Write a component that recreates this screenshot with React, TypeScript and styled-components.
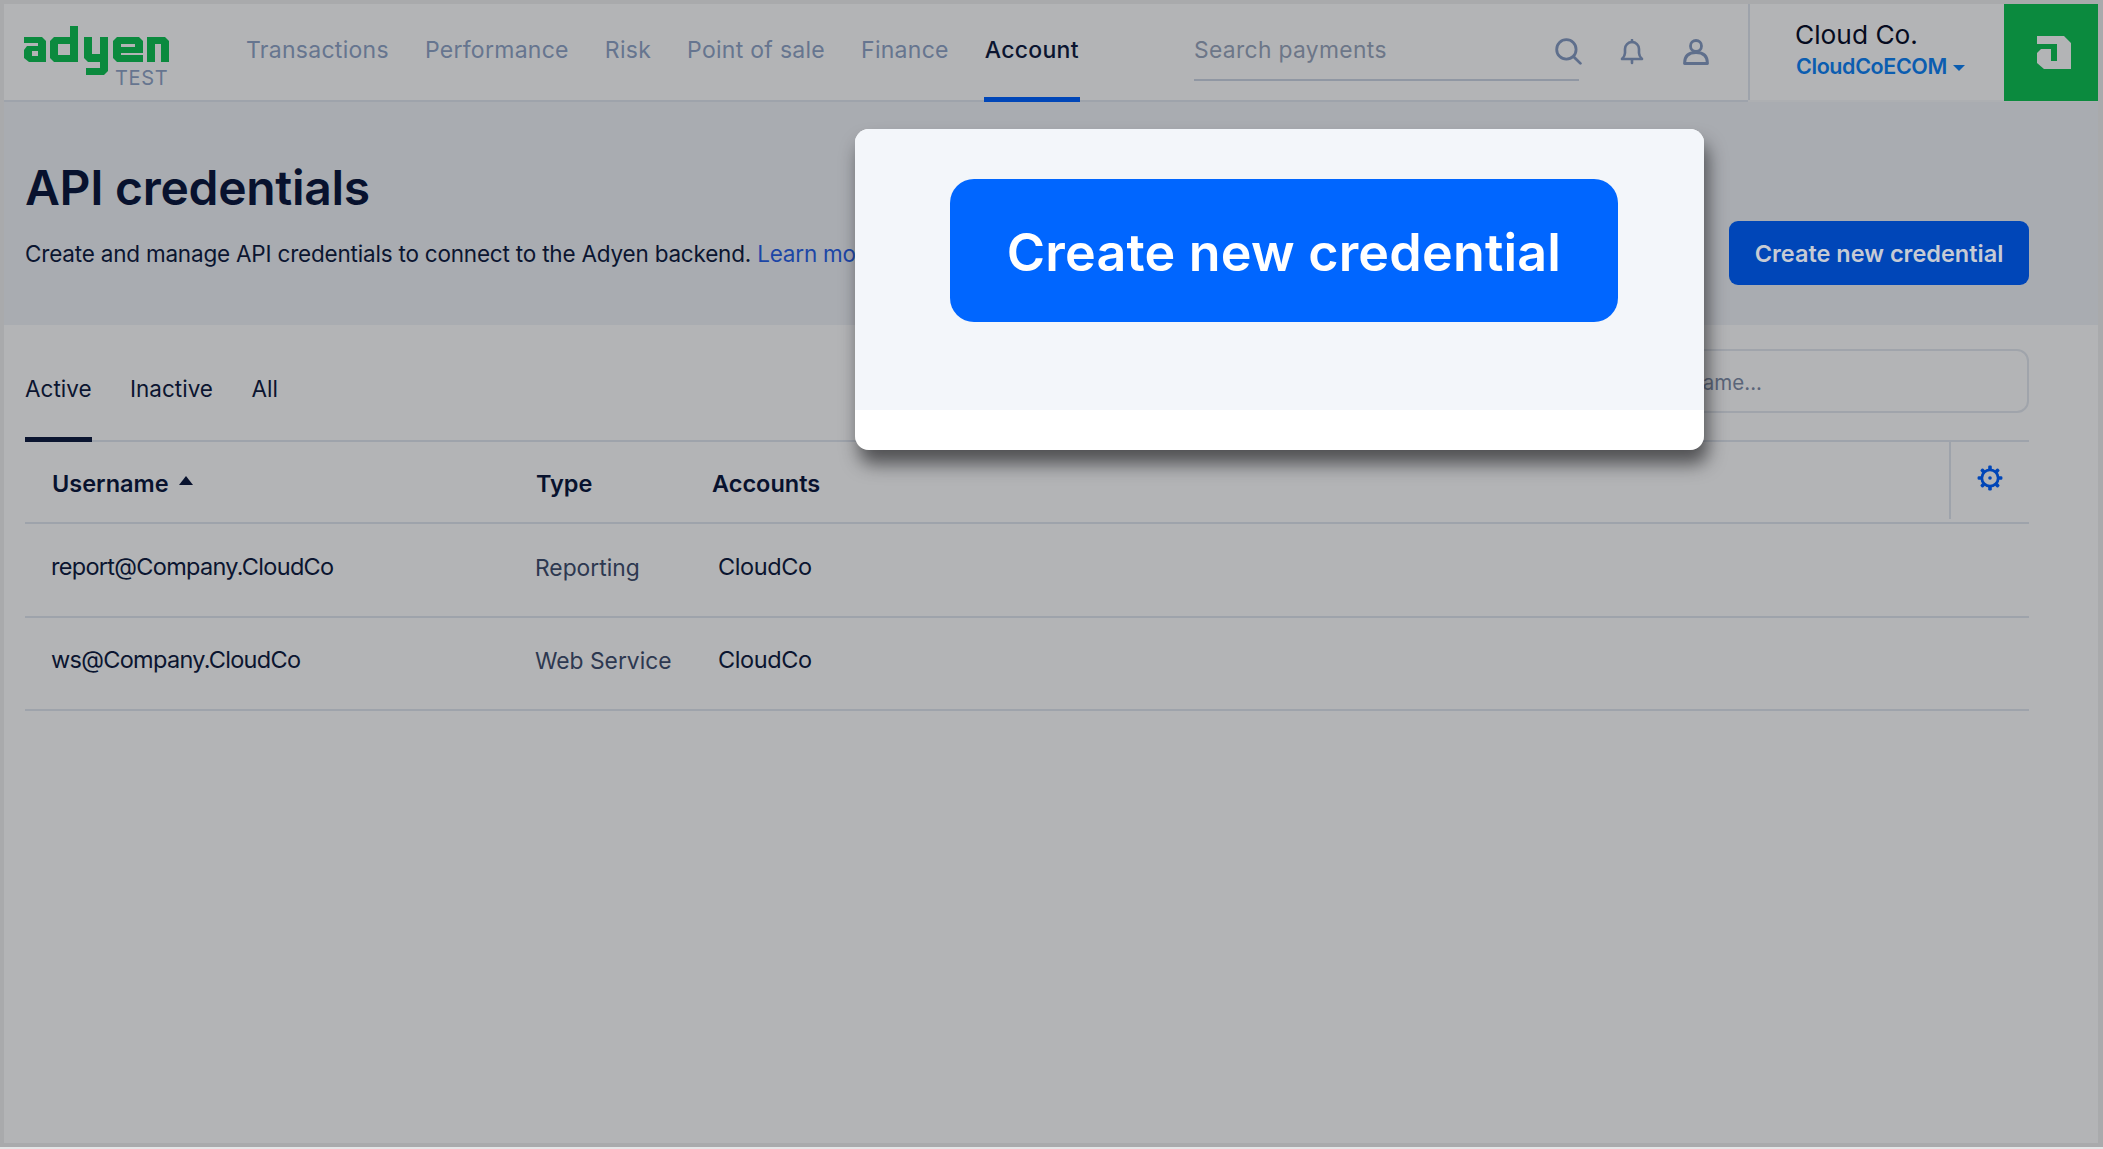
import React from "react";
import styled, { createGlobalStyle } from "styled-components";

const Global = createGlobalStyle`
  html, body { margin: 0; padding: 0; background: #e4e5e6; }
  * { box-sizing: border-box; }
  body { font-family: Inter, "Liberation Sans", sans-serif; color: #0b1530; overflow: hidden; }
`;

const Frame = styled.div`
  position: relative;
  width: 2103px;
  height: 1147px;
  background: #a9aaac;
  padding: 4px 5px 4px 4px;
`;
const Page = styled.div`
  height: 100%;
  background: #b3b4b6;
  display: flex;
  flex-direction: column;
`;
const Header = styled.header`
  height: 98px;
  flex: none;
  display: flex;
  align-items: stretch;
  border-bottom: 2px solid #9ea3ab;
`;
const LogoBox = styled.div`
  width: 206px;
  flex: none;
  padding: 22px 0 0 19px;
  display: flex;
  flex-direction: column;
  position: relative;
`;
const TestLabel = styled.span`
  position: absolute;
  left: 111px;
  top: 62px;
  font-size: 20px;
  line-height: 24px;
  letter-spacing: 0.7px;
  color: #66758f;
`;
const Nav = styled.nav`
  display: flex;
  gap: 34px;
  margin-left: 35px;
`;
const NavItem = styled.a<{ $active?: boolean }>`
  display: flex;
  align-items: center;
  height: 98px;
  padding: 0 1px 2px;
  font-size: 23px;
  letter-spacing: 0.28px;
  font-weight: ${(p) => (p.$active ? 500 : 400)};
  color: ${(p) => (p.$active ? "#0b1530" : "#66758f")};
  border-bottom: 5px solid ${(p) => (p.$active ? "#0046b8" : "transparent")};
`;
const HeaderSearch = styled.div`
  width: 385px;
  margin: 24px 0 0 auto;
  height: 53px;
  border-bottom: 2px solid #9097a3;
  font-size: 22.8px;
  letter-spacing: 0.35px;
  line-height: 44px;
  color: #6c7688;
  flex: none;
  display: flex;
  justify-content: space-between;
`;
const SearchGlyph = styled.span`
  color: #5f6f8c;
  margin: 9px -3px 0 0;
  line-height: 0;
`;
const IconRow = styled.div`
  display: flex;
  align-items: center;
  width: 169px;
  padding-left: 21px;
  color: #5f6f8c;
  flex: none;
`;
const IconSlot = styled.span`
  width: 64px;
  flex: none;
  display: flex;
  justify-content: center;
`;
const AccountArea = styled.div`
  display: flex;
  flex: none;
  width: 350px;
  box-shadow: 0 5px 0 #adafb2;
`;
const Account = styled.div`
  width: 256px;
  flex: none;
  border-left: 2px solid #9ea3ab;
  padding: 15px 0 0 45px;
`;
const AccountName = styled.div`
  font-size: 26.3px;
  line-height: 32px;
  color: #060b20;
`;
const AccountSub = styled.div`
  padding: 1px 0 0 1px;
  font-size: 21.5px;
  line-height: 28px;
  font-weight: 600;
  letter-spacing: -0.4px;
  color: #0b5db0;
  display: flex;
  align-items: center;
  gap: 6px;
`;
const Caret = styled.span`
  width: 0;
  height: 0;
  margin-top: 3px;
  border-left: 6px solid transparent;
  border-right: 6px solid transparent;
  border-top: 6px solid #0b5db0;
`;
const BrandTile = styled.div`
  flex: 1;
  margin-bottom: -1px;
  padding-left: 6px;
  background: #0b8a3e;
  display: flex;
  align-items: center;
  justify-content: center;
`;
const Hero = styled.section`
  height: 223px;
  flex: none;
  background: #a9acb1;
  padding: 0 69px 0 21px;
  display: flex;
  align-items: flex-start;
  justify-content: space-between;
`;
const HeroText = styled.div`
  padding-top: 58px;
`;
const Title = styled.h1`
  margin: 0;
  font-size: 48px;
  line-height: 56px;
  font-weight: 600;
  letter-spacing: -0.3px;
  color: #08122e;
`;
const Lead = styled.p`
  margin: 22px 0 0;
  font-size: 22.5px;
  letter-spacing: -0.2px;
  line-height: 32px;
  color: #0b1530;
  white-space: nowrap;
`;
const LearnLink = styled.a`
  color: #1c46a6;
`;
const HeroButton = styled.button`
  margin-top: 119px;
  width: 300px;
  height: 64px;
  border: 0;
  border-radius: 9px;
  background: #0046b8;
  color: #c6cbd4;
  font: 600 23.5px Inter, sans-serif;
`;
const Content = styled.main`
  padding: 0 69px 0 21px;
  flex: 1;
`;
const TabBar = styled.div`
  height: 117px;
  display: flex;
  align-items: flex-start;
  justify-content: space-between;
  border-bottom: 2px solid #9ea3ab;
`;
const Tabs = styled.div`
  display: flex;
  gap: 38.5px;
`;
const Tab = styled.a<{ $active?: boolean }>`
  display: block;
  height: 117px;
  padding-top: 48px;
  font-size: 22.5px;
  line-height: 32px;
  color: #0b1530;
  border-bottom: 5px solid ${(p) => (p.$active ? "#0b1530" : "transparent")};
`;
const FilterInput = styled.div`
  margin-top: 24px;
  width: 700px;
  height: 64px;
  border: 2px solid #a0a4ab;
  border-radius: 12px;
  font-size: 20.5px;
  line-height: 63px;
  color: #5a6579;
  text-align: right;
  padding-right: 265px;
`;
const HeadRow = styled.div`
  height: 82px;
  display: grid;
  grid-template-columns: 510px 176px 1fr 80px;
  border-bottom: 2px solid #9ea3ab;
`;
const HeadCell = styled.div`
  padding: 2px 0 0 1px;
  display: flex;
  align-items: center;
  font-size: 23.5px;
  font-weight: 600;
  letter-spacing: 0;
  color: #08122e;
  &:first-child { padding-left: 27px; }
`;
const SortArrow = styled.span`
  width: 0;
  height: 0;
  margin: -6px 0 0 10px;
  border-left: 7px solid transparent;
  border-right: 7px solid transparent;
  border-bottom: 9px solid #08122e;
`;
const GearCell = styled.div`
  border-left: 2px solid #9ea3ab;
  display: flex;
  justify-content: center;
  padding: 23px 0 0 0;
  margin-bottom: 3px;
`;
const Row = styled.div`
  height: 93.5px;
  display: grid;
  grid-template-columns: 510px 178px 1fr;
  align-items: center;
  border-bottom: 2px solid #9ea3ab;
  font-size: 23.5px;
`;
const UserCell = styled.div`
  padding-left: 26px;
  letter-spacing: -0.7px;
  color: #0b1530;
  margin-top: -7px;
`;
const TypeCell = styled.div`
  font-size: 22.8px;
  color: #2d3850;
  margin-top: -5px;
`;
const AccountCell = styled.div`
  padding-left: 5px;
  letter-spacing: -0.4px;
  color: #0b1530;
  margin-top: -7px;
`;
const Modal = styled.div`
  position: absolute;
  left: 855px;
  top: 129px;
  width: 849px;
  height: 321px;
  border-radius: 14px;
  overflow: hidden;
  background: #fff;
`;
const ModalShadow = styled.div`
  position: absolute;
  left: 855px;
  top: 129px;
  width: 849px;
  height: 321px;
  border-radius: 14px;
  box-shadow: 4px 14px 18px rgba(30, 30, 34, 0.66);
`;
const ModalBody = styled.div`
  height: 281px;
  background: #f3f6fa;
  padding: 50px 0 0 95px;
`;
const BigButton = styled.button`
  width: 668px;
  height: 143px;
  border: 0;
  border-radius: 24px;
  padding-top: 5px;
  background: #0066ff;
  color: #fff;
  font: 600 52px Inter, sans-serif;
  letter-spacing: 0.2px;
`;

const Logo = () => (
  <svg width="148" height="50" viewBox="0 0 148 50" fill="#0b8a3e" fillRule="evenodd" aria-label="Adyen">
    <path d="M1 11H19L23 15V36H6L1 32V24L4 20H15V17H1ZM9 25V30H15V25Z" />
    <path d="M55 0V36H31L27 32V15L31 11H47V0ZM35 18V29H47V18Z" />
    <path d="M61 11H69V28H77V11H85V45L81 49H63V42H77V36H65L61 32Z" />
    <path d="M94 11H116L120 15V27H98V29H120V36H94L90 32V15ZM98 18V21H112V18Z" />
    <path d="M124 11H142L146 15V36H138V18H132V36H124Z" />
  </svg>
);

const BrandMark = () => (
  <svg width="34" height="33" viewBox="0 0 34 33" fill="#b3b4b6">
    <path d="M0 0H27L34 7V33H7L0 27V17L4 13H14V25H20V8H0Z" />
  </svg>
);

const Gear = () => {
  const teeth = [0, 45, 90, 135, 180, 225, 270, 315];
  return (
    <svg width="26" height="26" viewBox="0 0 26 26">
      <circle cx="13" cy="13" r="8.2" fill="none" stroke="#0046b8" strokeWidth="2.8" />
      <circle cx="13" cy="13" r="1.8" fill="#0046b8" />
      {teeth.map((a) => (
        <rect key={a} x="11.2" y="0.6" width="3.6" height="4.2" rx="1.2" fill="#0046b8" transform={`rotate(${a} 13 13)`} />
      ))}
    </svg>
  );
};

const SearchIcon = () => (
  <svg width="28" height="28" viewBox="0 0 26 26" fill="none" stroke="currentColor" strokeWidth="2.6" strokeLinecap="round">
    <circle cx="11.5" cy="11.5" r="9" />
    <path d="M18.5 18.5l6 6" />
  </svg>
);
const BellIcon = () => (
  <svg width="24" height="26" viewBox="0 0 24 26" fill="none" stroke="currentColor" strokeWidth="2.6" strokeLinecap="round" strokeLinejoin="round">
    <path d="M2 20h20c-2-2-3-3-3-6V10a7 7 0 0 0-14 0v4c0 3-1 4-3 6z" />
    <path d="M12 1v2M12 21v3" />
  </svg>
);
const UserIcon = () => (
  <svg width="26" height="26" viewBox="0 0 26 26" fill="none" stroke="currentColor" strokeWidth="2.8" strokeLinejoin="round">
    <circle cx="13" cy="7" r="5.5" />
    <path d="M1.5 24.5c0-7 4-11 11.5-11s11.5 4 11.5 11z" />
  </svg>
);

export default function App() {
  return (
    <>
      <Global />
      <Frame>
        <Page>
          <Header>
            <LogoBox>
              <Logo />
              <TestLabel>TEST</TestLabel>
            </LogoBox>
            <Nav>
              <NavItem>Transactions</NavItem>
              <NavItem>Performance</NavItem>
              <NavItem>Risk</NavItem>
              <NavItem>Point of sale</NavItem>
              <NavItem>Finance</NavItem>
              <NavItem $active>Account</NavItem>
            </Nav>
            <HeaderSearch>
              Search payments
              <SearchGlyph><SearchIcon /></SearchGlyph>
            </HeaderSearch>
            <IconRow>
              <IconSlot><BellIcon /></IconSlot>
              <IconSlot><UserIcon /></IconSlot>
            </IconRow>
            <AccountArea>
              <Account>
                <AccountName>Cloud Co.</AccountName>
                <AccountSub>CloudCoECOM<Caret /></AccountSub>
              </Account>
              <BrandTile><BrandMark /></BrandTile>
            </AccountArea>
          </Header>
          <Hero>
            <HeroText>
              <Title>API credentials</Title>
              <Lead>
                Create and manage API credentials to connect to the Adyen backend. <LearnLink>Learn more</LearnLink>
              </Lead>
            </HeroText>
            <HeroButton>Create new credential</HeroButton>
          </Hero>
          <Content>
            <TabBar>
              <Tabs>
                <Tab $active>Active</Tab>
                <Tab>Inactive</Tab>
                <Tab>All</Tab>
              </Tabs>
              <FilterInput>Search by username...</FilterInput>
            </TabBar>
            <HeadRow>
              <HeadCell>Username<SortArrow /></HeadCell>
              <HeadCell>Type</HeadCell>
              <HeadCell>Accounts</HeadCell>
              <GearCell><Gear /></GearCell>
            </HeadRow>
            <Row>
              <UserCell>report@Company.CloudCo</UserCell>
              <TypeCell>Reporting</TypeCell>
              <AccountCell>CloudCo</AccountCell>
            </Row>
            <Row>
              <UserCell>ws@Company.CloudCo</UserCell>
              <TypeCell>Web Service</TypeCell>
              <AccountCell>CloudCo</AccountCell>
            </Row>
          </Content>
        </Page>
        <ModalShadow />
        <Modal>
          <ModalBody>
            <BigButton>Create new credential</BigButton>
          </ModalBody>
        </Modal>
      </Frame>
    </>
  );
}
